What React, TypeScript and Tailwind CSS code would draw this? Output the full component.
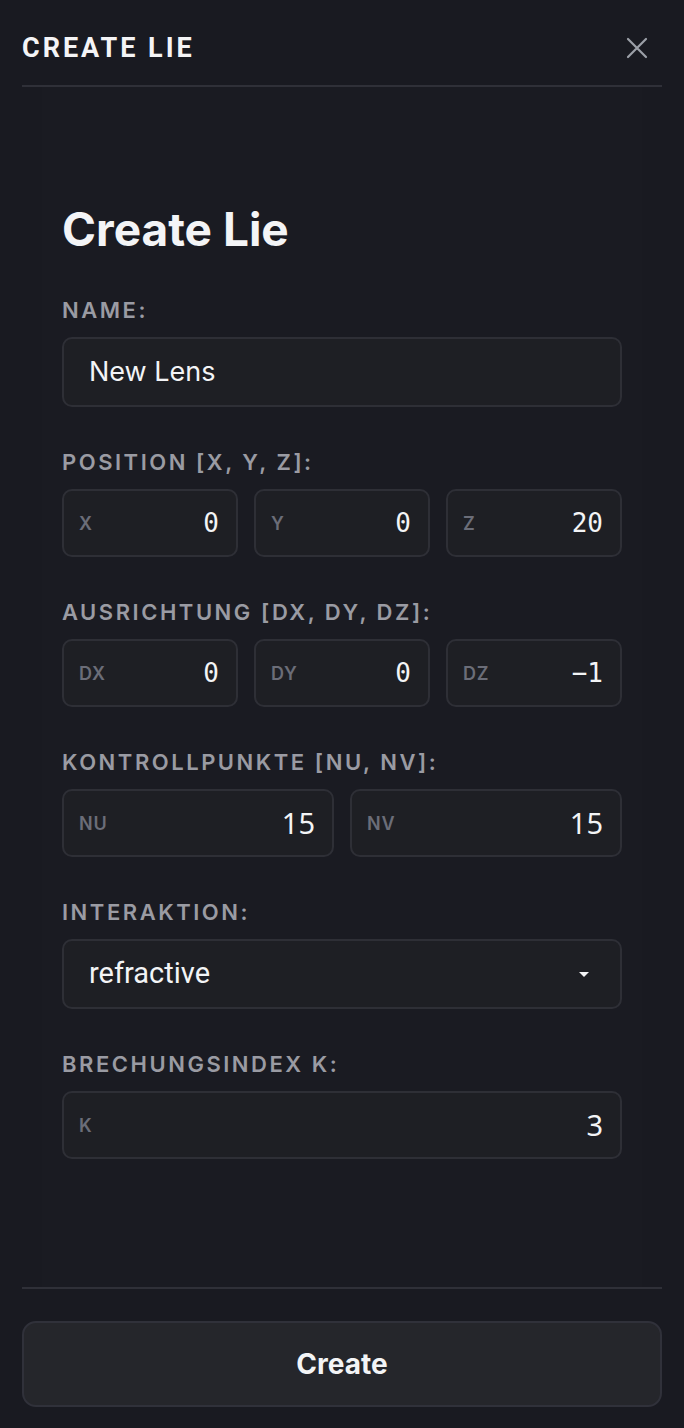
import React from "react";

const sans = "font-['Inter','Noto_Sans',sans-serif]";

function Label({ children }: { children: React.ReactNode }) {
  return (
    <div
      className={`${sans} text-[22px] leading-[30px] font-semibold tracking-[0.115em] text-[#9a9ba3] mb-[12px]`}
    >
      {children}
    </div>
  );
}

function NumField({
  tag,
  value,
  mono,
}: {
  tag: string;
  value: string;
  mono?: boolean;
}) {
  return (
    <div className="flex-1 h-[68px] rounded-[10px] border-2 border-[#2e2f36] bg-[#1e1f24] flex items-center justify-between pl-[15px] pr-[17px]">
      <span className={`${sans} text-[18px] font-semibold tracking-[0.04em] text-[#6b6d78]`}>
        {tag}
      </span>
      <span
        className={
          mono
            ? "font-['DejaVu_Sans_Mono',monospace] text-[26px] text-[#f3f4f6]"
            : "font-['Noto_Sans',sans-serif] text-[29px] text-[#f3f4f6]"
        }
      >
        {value}
      </span>
    </div>
  );
}

export default function App() {
  return (
    <div className="w-[684px] h-[1428px] bg-[#191a21] flex flex-col overflow-hidden">
      {/* header */}
      <div className="px-[22px]">
        <div className="h-[87px] pt-[12px] flex items-center justify-between border-b-2 border-[#2f3038]">
          <span className="font-['Roboto',sans-serif] text-[27px] font-bold tracking-[0.11em] text-[#f4f4f6]">
            CREATE LIE
          </span>
          <svg
            width="22"
            height="22"
            viewBox="0 0 22 22"
            className="mr-[14px] -mt-[2px]"
            stroke="#9ca0a8"
            strokeWidth="2.2"
            strokeLinecap="round"
          >
            <path d="M2 2L20 20M20 2L2 20" />
          </svg>
        </div>
      </div>

      {/* body */}
      <div className="flex-1 mx-[42px] bg-[#1a1b22] px-[20px] pt-[114px]">
        <h1 className={`${sans} text-[46px] leading-[56px] font-bold text-[#f3f4f6] mb-[38px]`}>
          Create Lie
        </h1>

        <Label>NAME:</Label>
        <div className="h-[70px] rounded-[10px] border-2 border-[#2e2f36] bg-[#1e1f24] flex items-center px-[25px]">
          <span className={`${sans} text-[27px] text-[#f3f4f6]`}>New Lens</span>
        </div>

        <div className="mt-[40px]">
          <Label>POSITION [X, Y, Z]:</Label>
          <div className="flex gap-[16px]">
            <NumField tag="X" value="0" mono />
            <NumField tag="Y" value="0" mono />
            <NumField tag="Z" value="20" mono />
          </div>
        </div>

        <div className="mt-[40px]">
          <Label>AUSRICHTUNG [DX, DY, DZ]:</Label>
          <div className="flex gap-[16px]">
            <NumField tag="DX" value="0" mono />
            <NumField tag="DY" value="0" mono />
            <NumField tag="DZ" value="−1" mono />
          </div>
        </div>

        <div className="mt-[40px]">
          <Label>KONTROLLPUNKTE [NU, NV]:</Label>
          <div className="flex gap-[16px]">
            <NumField tag="NU" value="15" />
            <NumField tag="NV" value="15" />
          </div>
        </div>

        <div className="mt-[40px]">
          <Label>INTERAKTION:</Label>
          <div className="h-[70px] rounded-[10px] border-2 border-[#2e2f36] bg-[#1e1f24] flex items-center justify-between pl-[25px] pr-[30px]">
            <span className="font-['Roboto',sans-serif] text-[29px] text-[#f3f4f6]">refractive</span>
            <svg width="12" height="7" viewBox="0 0 12 7" fill="#f3f4f6">
              <path d="M1 1h10L6 6z" />
            </svg>
          </div>
        </div>

        <div className="mt-[40px]">
          <Label>BRECHUNGSINDEX K:</Label>
          <div className="flex">
            <NumField tag="K" value="3" />
          </div>
        </div>
      </div>

      {/* footer */}
      <div className="px-[22px] pb-[21px]">
        <div className="border-t-2 border-[#2f3038] pt-[32px]">
          <button className="w-full h-[86px] rounded-[14px] border-2 border-[#30313a] bg-[#25262b] flex items-center justify-center">
            <span className={`${sans} text-[28px] font-bold text-[#f3f4f6]`}>Create</span>
          </button>
        </div>
      </div>
    </div>
  );
}
